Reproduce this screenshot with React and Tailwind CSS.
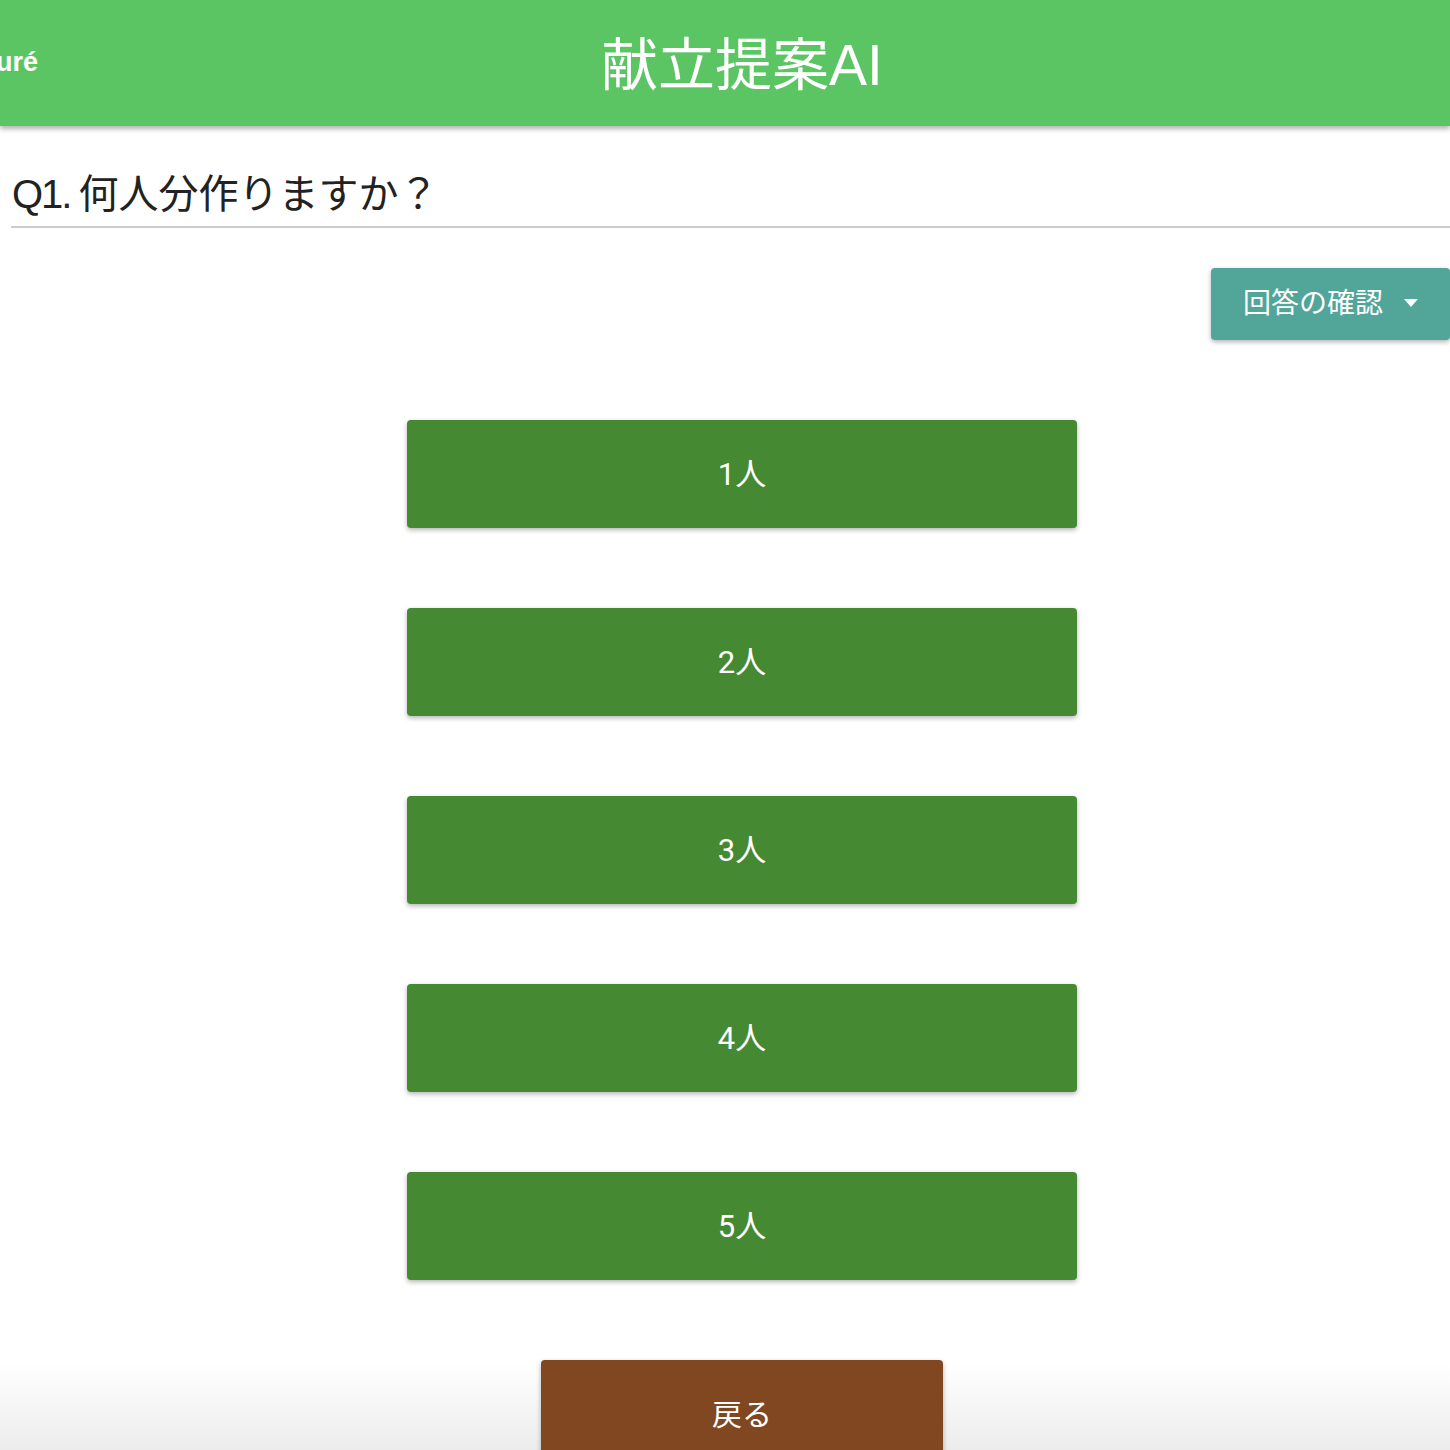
import React from 'react';

const people = ['1人', '2人', '3人', '4人', '5人'];

export default function App() {
  return (
    <div className="relative h-[1450px] overflow-hidden bg-linear-to-b from-white from-[94%] to-[#ececec] font-['Roboto','Noto_Sans_CJK_JP',sans-serif]">
      {/* Header */}
      <header className="relative z-10 flex h-[126px] items-center justify-center bg-[#5cc563] pl-[34px] shadow-[0_3px_5px_rgba(0,0,0,0.3)]">
        <span className="absolute left-[-4px] top-[49px] font-['Liberation_Sans','Noto_Sans_CJK_JP',sans-serif] text-[27px] font-semibold leading-none text-white">
          uré
        </span>
        <h1 className="pt-[4px] font-['Liberation_Sans','Noto_Sans_CJK_JP',sans-serif] text-[57px] leading-none text-white">
          献立提案AI
        </h1>
      </header>

      <main className="pl-[11px]">
        <h2 className="flex border-b-2 border-[#cccccc] pl-px pt-[44px] pb-[8px] font-['Liberation_Sans','Noto_Sans_CJK_JP',sans-serif] text-[40px] leading-[48px] text-[#222]">
          <span className="tracking-[-2px]">Q1.</span>
          <span className="ml-[8px]">何人分作りますか？</span>
        </h2>

        <div className="mt-[40px] flex justify-end">
          <button className="flex h-[72px] w-[239px] items-center gap-[21px] rounded-[4px] bg-[#52a599] pl-[32px] text-[28px] text-white shadow-[0_2px_5px_rgba(0,0,0,0.3)]">
            <span>回答の確認</span>
            <svg width="14" height="8" viewBox="0 0 14 8" className="mt-[-2px]">
              <path d="M0 0h14L7 8z" fill="white" />
            </svg>
          </button>
        </div>

        <div className="mt-[80px] flex flex-col items-center gap-[80px] pl-[23px]">
          {people.map((p) => (
            <button
              key={p}
              className="flex h-[108px] w-[670px] items-center justify-center rounded-[4px] bg-[#458933] pt-[3px] text-[31px] text-white shadow-[0_2px_5px_rgba(0,0,0,0.3)]"
            >
              {p}
            </button>
          ))}
          <button className="flex h-[108px] w-[402px] items-center justify-center rounded-[4px] bg-[#814720] text-[30px] text-white shadow-[0_2px_5px_rgba(0,0,0,0.3)]">
            戻る
          </button>
        </div>
      </main>
    </div>
  );
}
